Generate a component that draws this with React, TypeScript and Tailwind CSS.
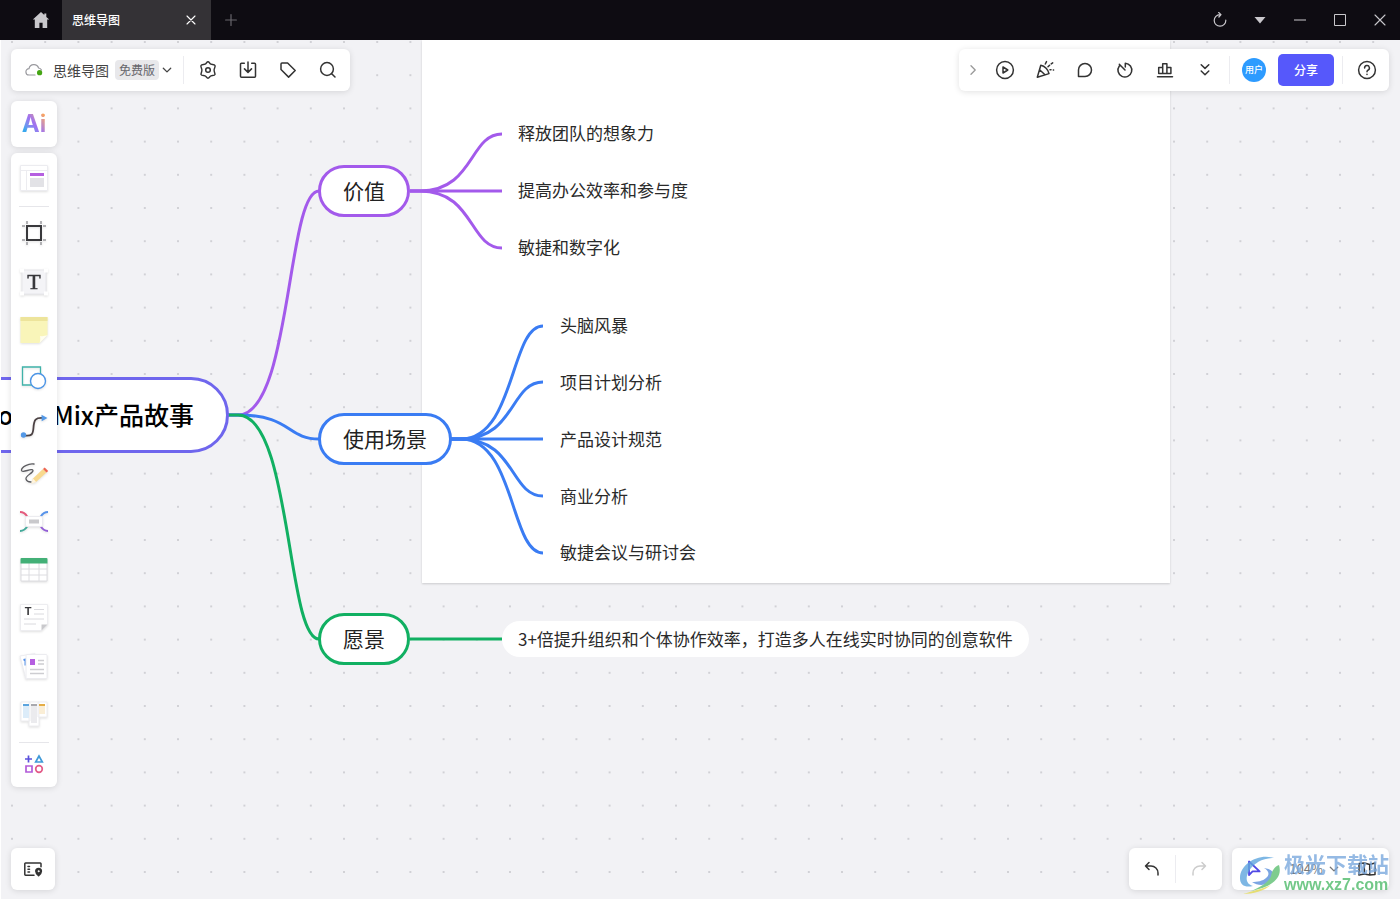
import React from 'react';

interface TopicProps {
  x: number;
  y: number;
  color: string;
  children: React.ReactNode;
}

interface LeafData {
  text: string;
  x: number;
  y: number;
}

const PURPLE = '#a35aeb';
const BLUE = '#3a7cf3';
const GREEN = '#11b062';

const leaves: LeafData[] = [
  { text: '释放团队的想象力', x: 518, y: 93 },
  { text: '提高办公效率和参与度', x: 518, y: 150 },
  { text: '敏捷和数字化', x: 518, y: 207 },
  { text: '头脑风暴', x: 560, y: 285 },
  { text: '项目计划分析', x: 560, y: 342 },
  { text: '产品设计规范', x: 560, y: 399 },
  { text: '商业分析', x: 560, y: 456 },
  { text: '敏捷会议与研讨会', x: 560, y: 512 },
];

const branches = [
  { color: PURPLE, from: [228, 375], to: [319, 151] },
  { color: BLUE, from: [228, 375], to: [319, 399] },
  { color: GREEN, from: [228, 375], to: [319, 599] },
  { color: PURPLE, from: [410, 151], to: [502, 94] },
  { color: PURPLE, from: [410, 151], to: [502, 151] },
  { color: PURPLE, from: [410, 151], to: [502, 208] },
  { color: BLUE, from: [451, 399], to: [543, 286] },
  { color: BLUE, from: [451, 399], to: [543, 342] },
  { color: BLUE, from: [451, 399], to: [543, 399] },
  { color: BLUE, from: [451, 399], to: [543, 456] },
  { color: BLUE, from: [451, 399], to: [543, 513] },
  { color: GREEN, from: [410, 599], to: [502, 599] },
];

// short straight lead, then an S curve
const branchPath = (from: number[], to: number[]) => {
  const start = from[0] + 10;
  const width = to[0] - start;
  return `M${from[0]} ${from[1]}H${start}C${start + width * 0.66} ${from[1]} ${start + width * 0.6} ${to[1]} ${to[0]} ${to[1]}`;
};

const Topic: React.FC<TopicProps> = ({ x, y, color, children }) => (
  <div
    className="absolute flex h-[52px] items-center rounded-full border-3 bg-white px-[22px] text-[21px] text-[#222]"
    style={{ left: x, top: y, borderColor: color }}
  >
    {children}
  </div>
);

const Icon: React.FC<{ size?: number; width?: number; children: React.ReactNode }> = ({ size = 20, width = 1.5, children }) => (
  <svg
    width={size}
    height={size}
    viewBox={`0 0 ${size} ${size}`}
    fill="none"
    stroke="currentColor"
    strokeWidth={width}
    strokeLinecap="round"
    strokeLinejoin="round"
    aria-hidden="true"
  >
    {children}
  </svg>
);

const IconButton: React.FC<{ label: string; className?: string; children: React.ReactNode }> = ({
  label,
  className = 'h-10 w-10 text-[#333]',
  children,
}) => (
  <button type="button" aria-label={label} className={`flex shrink-0 items-center justify-center ${className}`}>
    {children}
  </button>
);

const Divider = () => <div className="h-7 w-px shrink-0 bg-[#ececf0]" />;

const MindMap = () => (
  <div className="absolute inset-0 overflow-hidden">
    <svg className="absolute inset-0 h-full w-full" aria-hidden="true">
      <defs>
        <pattern id="dots" x="-4.6" y="-14.6" width="33.2" height="33.2" patternUnits="userSpaceOnUse">
          <circle cx="16.6" cy="16.6" r="1" fill="#c6c6cb" />
        </pattern>
      </defs>
      <rect width="100%" height="100%" fill="url(#dots)" />
    </svg>
    <div className="absolute top-0 left-[422px] h-[543px] w-[748px] bg-white shadow-[0_1px_2px_rgba(0,0,0,0.16)]" />
    <svg className="absolute inset-0 h-full w-full" fill="none" strokeWidth="3" aria-hidden="true">
      {branches.map((b, i) => (
        <path key={i} d={branchPath(b.from, b.to)} stroke={b.color} />
      ))}
    </svg>
    <div className="absolute top-[337px] -left-[56px] flex h-[76px] w-[285px] items-center justify-end rounded-full border-3 border-[#6f66ed] bg-white pr-8 pb-px text-[25px] font-medium whitespace-nowrap text-black">
      BoardMix产品故事
    </div>
    <Topic x={318} y={125} color={PURPLE}>价值</Topic>
    <Topic x={318} y={373} color={BLUE}>使用场景</Topic>
    <Topic x={318} y={573} color={GREEN}>愿景</Topic>
    {leaves.map((leaf) => (
      <div
        key={leaf.text}
        className="absolute -translate-y-1/2 text-[17px] leading-6 whitespace-nowrap text-[#2a2a2a]"
        style={{ left: leaf.x, top: leaf.y }}
      >
        {leaf.text}
      </div>
    ))}
    <div className="absolute top-[581px] left-[502px] flex h-9 items-center rounded-full bg-white px-4 pb-px text-[17px] whitespace-nowrap text-[#2a2a2a]">
      3+倍提升组织和个体协作效率，打造多人在线实时协同的创意软件
    </div>
  </div>
);

const TitleBar = () => (
  <header className="flex h-10 shrink-0 items-stretch bg-[#0e0c12] text-[#c9c8cc]">
    <button type="button" aria-label="首页" className="ml-[21px] flex w-10 items-center justify-center">
      <svg width="18" height="18" viewBox="0 0 18 18" fill="#c9c8cc" aria-hidden="true">
        <path d="M9 1 0.8 8.6h2V17h4.6v-5.2h3.2V17h4.6V8.6h2L14.3 5.9V2.6h-2v1.5z" />
      </svg>
    </button>
    <div className="ml-px flex w-[149px] items-center justify-between bg-[#343236] pr-[15px] pl-[10px] text-xs font-medium text-white">
      <span>思维导图</span>
      <button type="button" aria-label="关闭标签">
        <Icon size={10} width={1.1}><path d="M1 1l8 8M9 1l-8 8" /></Icon>
      </button>
    </div>
    <button type="button" aria-label="新标签" className="ml-[14px] text-[#68666c]">
      <Icon size={12} width={1.2}><path d="M6 .6v10.8M.6 6h10.8" /></Icon>
    </button>
    <div className="ml-auto flex">
      <IconButton label="刷新" className="h-10 w-10">
        <Icon size={16} width={1.2}><path d="M8 2.600A5.800 5.800 0 1 0 13.800 8.200M6.700 .5 9 2.600 6.900 5" /></Icon>
      </IconButton>
      <IconButton label="更多" className="h-10 w-10">
        <svg width="12" height="8" viewBox="0 0 12 8" fill="currentColor" aria-hidden="true"><path d="M.5 1h11L6 7.400z" /></svg>
      </IconButton>
      <IconButton label="最小化" className="h-10 w-10">
        <Icon size={12} width={1.2}><path d="M.5 6h11" /></Icon>
      </IconButton>
      <IconButton label="最大化" className="h-10 w-10">
        <svg width="12" height="12" viewBox="0 0 12 12" fill="none" stroke="currentColor" aria-hidden="true"><path d="M.5 .5h11v11H.5z" /></svg>
      </IconButton>
      <IconButton label="关闭" className="h-10 w-10">
        <Icon size={12} width={1.1}><path d="M1 1l10 10M11 1 1 11" /></Icon>
      </IconButton>
    </div>
  </header>
);

const FileBar = () => (
  <div className="flex h-[42px] items-center rounded-md bg-white pr-[2px] pl-[14px] shadow-[0_1px_6px_rgba(0,0,0,0.12)]">
    <svg width="20" height="16" viewBox="0 0 20 16" fill="none" aria-hidden="true">
      <path d="M10 13H4.200A3.200 3.200 0 0 1 4 6.600 5 5 0 0 1 13.600 6 4 4 0 0 1 16.500 8" stroke="#9a9a9f" strokeWidth="1.200" strokeLinecap="round" />
      <circle cx="14.600" cy="10.700" r="2.600" fill="#45a514" />
    </svg>
    <button type="button" className="ml-2 flex items-center text-sm leading-5 text-[#444]">
      <span className="pb-px">思维导图</span>
      <span className="mr-[3px] ml-[6px] rounded-sm bg-[#e8e8eb] px-1 text-xs leading-5 text-[#66666c]">免费版</span>
      <Icon size={10} width={1.3}><path d="M1.300 3.200 5 6.900l3.700-3.700" /></Icon>
    </button>
    <div className="ml-[11px] flex items-center">
      <Divider />
      <div className="ml-1 flex">
        <IconButton label="设置">
          <Icon>
            <path
              d="M10 1.800C11.300 1.800 11.700 3.700 13 4.200S16.400 4 17 5.500s-.9 2.900-.9 4.500.9 3.200.9 4.500c-.6 1.500-2.700.8-4 1.300s-1.700 2.400-3 2.400-1.700-1.900-3-2.400-3.400.2-4-1.300c0-1.300.9-2.900.9-4.500S2.400 7 3 5.500s2.700-.8 4-1.300 1.700-2.400 3-2.400z"
              strokeWidth="1.400"
            />
            <circle cx="10" cy="10" r="2.300" />
          </Icon>
        </IconButton>
        <IconButton label="导出">
          <Icon><path d="M6.300 3.200H3.500a1 1 0 0 0-1 1v12.100a1 1 0 0 0 1 1h13a1 1 0 0 0 1-1V4.200a1 1 0 0 0-1-1h-2.800M10 2v10.300M6.500 8.900 10 12.400l3.500-3.500" /></Icon>
        </IconButton>
        <IconButton label="标签">
          <Icon><path d="M3 4v5.500l7.600 7.600 6.600-6.600L9.600 3H4a1 1 0 0 0-1 1z" /></Icon>
        </IconButton>
        <IconButton label="搜索">
          <Icon><circle cx="9" cy="9" r="6.400" /><path d="m13.700 13.700 3.300 3.300" /></Icon>
        </IconButton>
      </div>
    </div>
  </div>
);

const ActionBar = () => (
  <div className="flex h-[42px] items-center rounded-md bg-white pr-[2px] shadow-[0_1px_6px_rgba(0,0,0,0.12)]">
    <IconButton label="收起" className="h-10 w-[26px] pl-[2px] text-[#999]">
      <Icon size={10} width={1.3}><path d="M3 .8 7.200 5 3 9.200" /></Icon>
    </IconButton>
    <IconButton label="演示">
      <Icon><circle cx="10" cy="10" r="8.400" /><path d="M8 7v6l4.800-3z" /></Icon>
    </IconButton>
    <IconButton label="庆祝">
      <Icon>
        <path d="M5.800 5.300 2.300 17.200 14 13.600C13.300 9.800 9.800 6 5.800 5.300zM4.600 9.700l5.400 5.100M10.300 4l1.200-2.400M13 6.800l1.600-1.600M16.200 3.900l1.500-1M15 9.700h1M18.300 9.900h.3" />
      </Icon>
    </IconButton>
    <IconButton label="评论">
      <Icon><path d="M3.500 16.500V10A6.500 6.500 0 1 1 10 16.500z" /></Icon>
    </IconButton>
    <IconButton label="计时器">
      <Icon><path d="M10.300 7V3.200A6.900 6.900 0 1 1 4.300 6M4.300 4.300 10 10" /></Icon>
    </IconButton>
    <IconButton label="投票">
      <Icon><path d="M2.500 16.800h15M3.700 13.500v-6h4v6zM7.700 13.500V3.800h4.200v9.700zM11.900 13.500V7.500h4v6z" /></Icon>
    </IconButton>
    <IconButton label="更多">
      <Icon><path d="m6.200 4.700 3.800 3.700 3.800-3.700M6.200 11l3.800 3.700 3.800-3.700" /></Icon>
    </IconButton>
    <div className="ml-1 flex items-center">
      <Divider />
      <button type="button" className="ml-3 h-6 w-6 rounded-full bg-[#2d9bff] text-[9px] font-medium whitespace-nowrap text-white">用户</button>
      <button type="button" className="mr-2 ml-3 h-8 rounded-[5px] bg-[#5658fb] px-4 text-xs font-medium text-white">分享</button>
      <Divider />
    </div>
    <IconButton label="帮助" className="ml-1 h-10 w-10 text-[#333]">
      <Icon><circle cx="10" cy="10" r="8.400" /><path d="M7.600 8A2.400 2.400 0 1 1 10.900 10.200Q10 10.700 10 11.800M10 14.300v.1" /></Icon>
    </IconButton>
  </div>
);

const Tool: React.FC<{ label: string; children: React.ReactNode }> = ({ label, children }) => (
  <button type="button" aria-label={label} className="flex h-12 w-full shrink-0 items-center justify-center">
    <svg width="32" height="32" viewBox="0 0 32 32" fill="none" className="drop-shadow-[0_1px_1px_rgba(0,0,0,0.12)]" aria-hidden="true">
      {children}
    </svg>
  </button>
);

const ToolPanel = () => (
  <nav className="flex flex-col rounded-md bg-white pt-[2px] pb-1 shadow-[0_1px_6px_rgba(0,0,0,0.12)]">
    <Tool label="模板">
      <path d="M2.500 2.500h27v25h-27z" fill="#fff" stroke="#ececf0" />
      <path d="M2.500 7.500h27M8.500 7.500v20" stroke="#ececf0" />
      <path d="M12 10h14v3H12z" fill="#b55fe0" />
      <path d="M12 15h14v9H12z" fill="#e2e2e6" />
    </Tool>
    <div className="mx-2 my-[3px] h-px bg-[#e6e6ea]" />
    <Tool label="画框">
      <path d="M9 8h14v14H9z" stroke="#38383b" strokeWidth="2" />
      <path d="M9 3v3M23 3v3M9 24v3M23 24v3M4 8h3M4 22h3M25 8h3M25 22h3" stroke="#9a9a9e" strokeWidth="1.500" />
    </Tool>
    <Tool label="文本">
      <path d="M4 4h24v24H4z" fill="#f4f4f7" stroke="#e6e6ea" />
      <path d="M2 2.500h4v4H2zM26 2.500h4v4h-4zM2 25.500h4v4H2zM26 25.500h4v4h-4z" fill="#fff" />
      <text x="16" y="23" textAnchor="middle" fontSize="22" fontFamily="Liberation Serif, serif" fill="#38383c" stroke="#38383c" strokeWidth=".5">T</text>
    </Tool>
    <Tool label="便签">
      <path d="M2.500 3h27v18l-8 8h-19z" fill="#f9f5b9" />
      <path d="M2.500 3h27v4h-27z" fill="#ede49b" />
      <path d="M21.500 29c1-2 1-5 .5-7 2.500.5 5.500 0 7.500-1z" fill="#fffef0" />
    </Tool>
    <Tool label="形状">
      <path d="M4.500 5h18v18h-18z" stroke="#3fb2a9" strokeWidth="1.300" />
      <circle cx="20" cy="19" r="7.500" fill="#fff" stroke="#4b94e6" strokeWidth="1.400" />
    </Tool>
    <Tool label="连线">
      <path d="M6 25.500c8 1 9-1 9.500-8 .5-8 2-10 9.500-9.500" stroke="#4b4143" strokeWidth="1.800" />
      <circle cx="5.500" cy="25" r="2.700" fill="#5398e6" />
      <path d="m23.500 4.800 6 3.200-5.800 3.200z" fill="#5398e6" />
    </Tool>
    <Tool label="画笔">
      <path d="M16 6c-5-1-13 3-12.500 6.500.5 3 11-3 11.500 0 .4 2.500-8 5-7 8.500.4 1.500 2 3 5 3" stroke="#5d5d61" strokeWidth="1.300" strokeLinecap="round" />
      <path d="m13.500 25.500 1.500-5 10-9.500 3.500 3.500-10.500 9.500z" fill="#f8d98e" />
      <path d="m13.500 25.500 1.500-5 3.400 3.700z" fill="#fff5df" />
      <path d="m25 11 1.700-1.600 3.500 3.500-1.700 1.600z" fill="#ee6551" />
    </Tool>
    <Tool label="思维导图">
      <path d="M2 6c6 0 6.500 4 9 7" stroke="#e45a7c" strokeWidth="1.800" />
      <path d="M30 6c-6 0-6.500 4-9 7" stroke="#5793ea" strokeWidth="1.800" />
      <path d="M2 25c6 0 6.500-4 9-7" stroke="#43aa9a" strokeWidth="1.800" />
      <path d="M30 25c-6 0-6.500-4-9-7" stroke="#925ed6" strokeWidth="1.800" />
      <rect x="7.500" y="10.500" width="17" height="10" rx="1.500" fill="#fff" stroke="#ececf0" />
      <path d="M11 13.500h10v4H11z" fill="#c9c9cc" />
    </Tool>
    <Tool label="表格">
      <path d="M3 8h26v19H3z" fill="#fff" />
      <path d="M3 9v18h26V9M11 9v18M21 9v18M3 15h26M3 21h26" stroke="#dcdce0" />
      <path d="M3.500 4h25a1 1 0 0 1 1 1v4.500h-27V5a1 1 0 0 1 1-1z" fill="#43b077" />
    </Tool>
    <Tool label="文档">
      <path d="M2.500 2.500h27v20l-6 6h-21z" fill="#fff" stroke="#ededf0" />
      <path d="M23.500 28.500v-6h6z" fill="#c9c9cc" />
      <path d="M16 7.500h10M16 12h10M6 17h20M6 22h12" stroke="#dadade" />
      <text x="10" y="13" textAnchor="middle" fontSize="11" fontFamily="Liberation Sans, sans-serif" fontWeight="700" fill="#38383b">T</text>
    </Tool>
    <Tool label="卡片">
      <path d="m2 6 15-2.500 4 23L8 29z" fill="#fff" stroke="#ececf0" />
      <path d="m5.500 10 2-.5v6" stroke="#5793ea" strokeWidth="2" />
      <rect x="8" y="4.500" width="21" height="24" rx="1" fill="#fff" stroke="#ececf0" />
      <path d="M12 9h5v6h-5z" fill="#b55fe0" />
      <path d="M20 10.500h6M20 14h6M12 19.500h14M12 23.500h14" stroke="#cdcdd1" strokeWidth="1.400" />
    </Tool>
    <Tool label="看板">
      <path d="M3 4h9v19H3zM20 4h9v15h-9zM11 4h10v24H11z" fill="#fff" stroke="#ededf0" />
      <path d="M5 6h6v2H5z" fill="#5ba4de" />
      <path d="M5 8h6v12H5z" fill="#dcecf9" />
      <path d="M13 6h6v2h-6z" fill="#a9a9ae" />
      <path d="M13 8h6v17h-6z" fill="#ebebee" />
      <path d="M21 6h6v2h-6z" fill="#e5ad45" />
      <path d="M21 8h6v8h-6z" fill="#faeed6" />
    </Tool>
    <div className="mx-2 my-1 h-px bg-[#e6e6ea]" />
    <button type="button" aria-label="更多应用" className="flex h-9 items-center justify-center pb-[2px]">
      <svg width="20" height="20" viewBox="0 0 20 20" fill="none" strokeWidth="1.700" aria-hidden="true">
        <path d="M1 5h7M4.500 1.500v7" stroke="#5a50dc" />
        <path d="M15 2 11.700 8h6.600z" stroke="#409ad8" />
        <path d="M2 12h6v6H2z" stroke="#b35cd9" />
        <circle cx="15" cy="15" r="3.300" stroke="#e35c89" />
      </svg>
    </button>
  </nav>
);

const Watermark = () => (
  <div className="pointer-events-none absolute right-[11px] bottom-[5px] flex items-center opacity-80">
    <svg width="46" height="44" viewBox="0 0 46 44" fill="none" aria-hidden="true">
      <path d="M36 7C20 2 3 13 2 26c-.5 8 5 11 13 9C8 33 7 27 11 20 16 12 25 7 36 7z" fill="#5fa6de" />
      <path d="M14 31c7 5 17 3 21-2 4-6-1-11-9-12 5 3 6 7 2 10-3 3-9 4-14 4z" fill="#5b8fdc" />
      <path d="M41 14c4 13-7 22-28 26 10-4 18-9 20-15 1-5 3-9 8-11z" fill="#5fc073" />
      <path d="M5 43c10 0 21-3 28-9-7 3-18 6-28 9z" fill="#e6dc55" />
    </svg>
    <div className="flex flex-col">
      <span className="text-[21px] leading-6 font-bold text-[#7ba9de]">极光下载站</span>
      <span className="font-['Liberation_Sans'] text-base leading-5 font-bold text-[#4fbb6b]">www.xz7.com</span>
    </div>
  </div>
);

const App: React.FC = () => {
  return (
    <div className="flex h-screen flex-col overflow-hidden font-['Noto_Sans_CJK_SC',sans-serif]">
      <TitleBar />
      <main className="relative flex-1 bg-[#f2f2f5]">
        <MindMap />

        <div className="absolute inset-x-0 top-0 flex justify-between px-[11px] pt-[9px]">
          <FileBar />
          <ActionBar />
        </div>

        <div className="absolute top-[61px] left-[11px] flex w-[46px] flex-col gap-[6px]">
          <button type="button" className="h-[46px] rounded-md bg-white shadow-[0_1px_6px_rgba(0,0,0,0.12)]">
            <span className="bg-linear-to-tr from-[#38a8ee] from-20% via-[#a06ff0] via-50% to-[#f9a35d] to-85% bg-clip-text font-['Inter'] text-2xl font-bold text-transparent">
              Ai
            </span>
          </button>
          <ToolPanel />
        </div>

        <div className="absolute inset-x-0 bottom-[10px] flex items-center px-[11px]">
          <IconButton label="大纲" className="h-[42px] w-11 rounded-md bg-white text-[#333] shadow-[0_1px_6px_rgba(0,0,0,0.12)]">
            <Icon>
              <path d="M11 16.300H2.500a.7.700 0 0 1-.7-.7V4.700a.7.700 0 0 1 .7-.7h14.800a.7.700 0 0 1 .7.700v3M5 7.500h1.500M5 10.200h1.500M5 12.900h1.500" />
              <path d="M15.600 9.500a2.800 2.800 0 0 0-2.800 2.800c0 2 2.800 4.500 2.800 4.500s2.800-2.500 2.800-4.500a2.800 2.800 0 0 0-2.800-2.800z" fill="currentColor" />
              <circle cx="15.600" cy="12.200" r=".7" fill="#fff" stroke="#fff" strokeWidth=".5" />
            </Icon>
          </IconButton>
          <div className="ml-auto flex h-[42px] items-center rounded-md bg-white shadow-[0_1px_6px_rgba(0,0,0,0.12)]">
            <IconButton label="撤销" className="h-10 w-[46px] text-[#333]">
              <Icon><path d="M7 3.500 3.500 7 7 10.500M3.500 7H9a7 7 0 0 1 7 7v2" /></Icon>
            </IconButton>
            <Divider />
            <IconButton label="重做" className="h-10 w-[46px] text-[#ccc]">
              <Icon><path d="m13 3.500 3.500 3.500-3.500 3.500M16.500 7H11a7 7 0 0 0-7 7v2" /></Icon>
            </IconButton>
          </div>
          <div className="ml-[10px] flex h-[42px] items-center rounded-md bg-white pl-px shadow-[0_1px_6px_rgba(0,0,0,0.12)]">
            <IconButton label="选择" className="h-10 w-10 text-[#5049e5]">
              <Icon width={1.8}><path d="M6 2.500v13.500l3.600-3.600h7z" /></Icon>
            </IconButton>
            <button type="button" className="ml-4 flex items-center gap-[6px] text-[13px] text-[#777]">
              104%
              <Icon size={10} width={1.3}><path d="M1.300 3.200 5 6.900l3.700-3.700" /></Icon>
            </button>
            <IconButton label="小地图" className="ml-[6px] h-10 w-11 text-[#333]">
              <Icon><path d="M2 4.500 7.300 4l5.400 1.500L18 4v11.500L12.700 16l-5.400-1L2 16zM7.300 4v11M12.700 5.500V16" /></Icon>
            </IconButton>
          </div>
        </div>

        <Watermark />
        <div className="pointer-events-none absolute inset-0 border-b border-l border-white" />
      </main>
    </div>
  );
};

export default App;
